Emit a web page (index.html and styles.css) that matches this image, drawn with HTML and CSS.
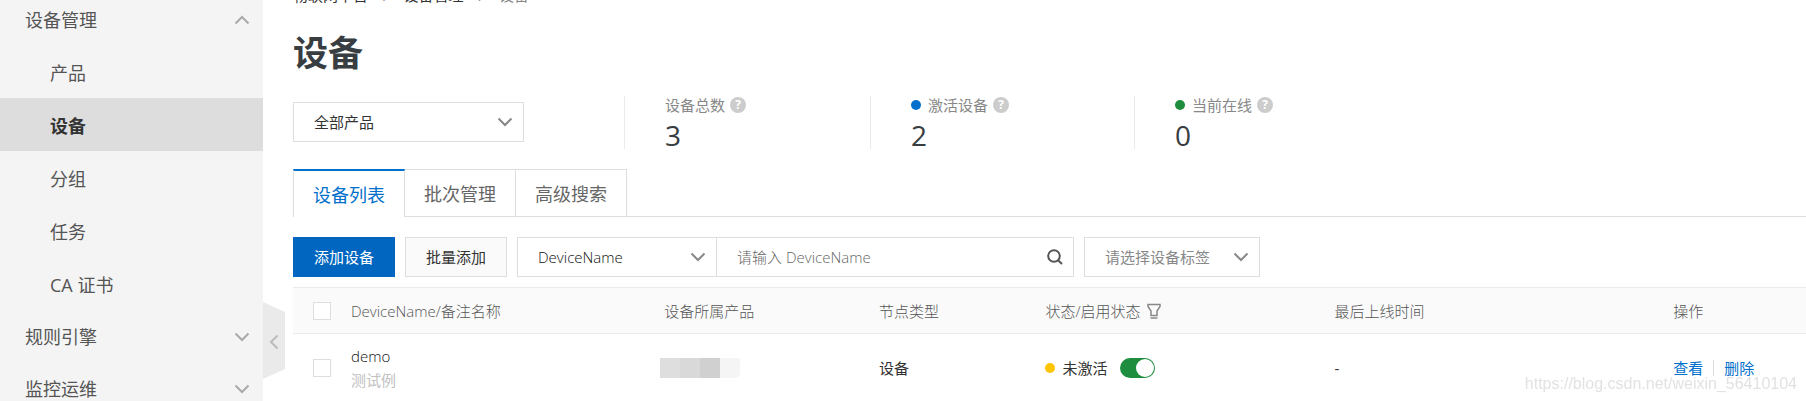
FILE: index.html
```html
<!DOCTYPE html>
<html lang="zh-CN">

<head>
    <meta charset="UTF-8">
    <meta name="viewport" content="width=device-width, initial-scale=1.0">
    <title>设备</title>
    <link rel="stylesheet" href="styles.css">
</head>

<body>
    <div class="layout">
        <nav class="sidebar">
            <a class="menu-item" href="#">设备管理
                <svg class="arrow" viewBox="0 0 16 10"><path d="M1.5 8.5L8 2l6.5 6.5" /></svg>
            </a>
            <a class="menu-item sub" href="#">产品</a>
            <a class="menu-item sub active" href="#">设备</a>
            <a class="menu-item sub" href="#">分组</a>
            <a class="menu-item sub" href="#">任务</a>
            <a class="menu-item sub" href="#">CA 证书</a>
            <a class="menu-item" href="#">规则引擎
                <svg class="arrow" viewBox="0 0 16 10"><path d="M1.5 1.5L8 8l6.5-6.5" /></svg>
            </a>
            <a class="menu-item" href="#">监控运维
                <svg class="arrow" viewBox="0 0 16 10"><path d="M1.5 1.5L8 8l6.5-6.5" /></svg>
            </a>
            <button class="collapse" type="button" aria-label="收起菜单">
                <svg viewBox="0 0 10 16"><path d="M8.5 1.5L2 8l6.5 6.5" /></svg>
            </button>
        </nav>

        <main class="main">
            <div class="breadcrumb">
                <a href="#">物联网平台</a>
                <span>/</span>
                <a href="#">设备管理</a>
                <span>/</span>
                <span>设备</span>
            </div>
            <h1 class="title">设备</h1>

            <div class="summary">
                <div class="select product-select">
                    <select aria-label="产品">
                        <option>全部产品</option>
                    </select>
                    <svg class="arrow" viewBox="0 0 16 10"><path d="M1.5 1.5L8 8l6.5-6.5" /></svg>
                </div>
                <div class="stat">
                    <div class="stat-label">设备总数<span class="help">?</span></div>
                    <div class="stat-value">3</div>
                </div>
                <div class="stat">
                    <div class="stat-label"><i class="dot blue"></i>激活设备<span class="help">?</span></div>
                    <div class="stat-value">2</div>
                </div>
                <div class="stat">
                    <div class="stat-label"><i class="dot green"></i>当前在线<span class="help">?</span></div>
                    <div class="stat-value">0</div>
                </div>
            </div>

            <div class="tabs">
                <button class="tab active" type="button">设备列表</button>
                <button class="tab" type="button">批次管理</button>
                <button class="tab" type="button">高级搜索</button>
            </div>

            <div class="toolbar">
                <button class="btn primary" type="button">添加设备</button>
                <button class="btn" type="button">批量添加</button>
                <div class="search-group">
                    <div class="select field-select">
                        <select aria-label="搜索字段">
                            <option>DeviceName</option>
                        </select>
                        <svg class="arrow" viewBox="0 0 16 10"><path d="M1.5 1.5L8 8l6.5-6.5" /></svg>
                    </div>
                    <div class="search">
                        <input type="text" placeholder="请输入 DeviceName" aria-label="DeviceName">
                        <button type="button" aria-label="搜索">
                            <svg viewBox="0 0 16 16"><circle cx="7" cy="7" r="5.8" /><path d="M11 11.2L15 15" /></svg>
                        </button>
                    </div>
                </div>
                <div class="select tag-select">
                    <select aria-label="设备标签">
                        <option>请选择设备标签</option>
                    </select>
                    <svg class="arrow" viewBox="0 0 16 10"><path d="M1.5 1.5L8 8l6.5-6.5" /></svg>
                </div>
            </div>

            <table class="table">
                <thead>
                    <tr>
                        <th class="col-check"><input type="checkbox" aria-label="全选"></th>
                        <th class="col-name">DeviceName/备注名称</th>
                        <th class="col-product">设备所属产品</th>
                        <th class="col-type">节点类型</th>
                        <th class="col-status">
                            <div class="cell">状态/启用状态
                                <svg class="filter" viewBox="0 0 14 16"><path d="M1 1.5h12v2L10 8v4.5H4V8L1 3.5z" /><path d="M3.500 15h7" /></svg>
                            </div>
                        </th>
                        <th class="col-time">最后上线时间</th>
                        <th>操作</th>
                    </tr>
                </thead>
                <tbody>
                    <tr>
                        <td class="col-check"><input type="checkbox" aria-label="demo"></td>
                        <td>
                            <div class="name">demo</div>
                            <div class="remark">测试例</div>
                        </td>
                        <td class="masked">
                            <div class="mosaic"><i></i><i></i><i></i><i></i></div>
                        </td>
                        <td>设备</td>
                        <td>
                            <div class="cell"><i class="dot yellow"></i>未激活
                                <input class="switch" type="checkbox" checked aria-label="启用状态">
                            </div>
                        </td>
                        <td>-</td>
                        <td>
                            <div class="cell actions"><a href="#">查看</a><a href="#">删除</a></div>
                        </td>
                    </tr>
                </tbody>
            </table>
        </main>
    </div>
    <div class="watermark">https://blog.csdn.net/weixin_56410104</div>
</body>

</html>
```
FILE: styles.css
```css
* {
    margin: 0;
    padding: 0;
    box-sizing: border-box;
}

body {
    height: 100vh;
    overflow: hidden;
    font-family: "Open Sans", "Noto Sans CJK SC", sans-serif;
    font-size: 15px;
    line-height: 24px;
    color: #333;
    background: #fff;
}

a {
    color: inherit;
    text-decoration: none;
}

button,
input,
select {
    font: inherit;
    color: inherit;
    background: none;
    border: none;
    border-radius: 0;
    outline: none;
}

svg {
    fill: none;
    stroke: currentColor;
    stroke-width: 2;
}

.layout {
    display: flex;
    min-height: 100vh;
}

/* 左侧菜单 */
.sidebar {
    position: relative;
    flex: none;
    width: 263px;
    margin-top: -7px;
    background: #f4f4f4;
}

.menu-item {
    display: flex;
    align-items: center;
    justify-content: space-between;
    height: 52px;
    padding: 2px 13px 0 25px;
    font-size: 18px;
    color: #555;
}

.menu-item.sub {
    height: 53px;
    padding-left: 50px;
}

.menu-item.active {
    font-weight: 700;
    color: #333;
    background: #ddd;
}

.arrow {
    width: 16px;
    height: 10px;
    color: #888;
    pointer-events: none;
}

.menu-item .arrow {
    color: #aaa;
}

.collapse {
    position: absolute;
    top: 309px;
    left: 100%;
    display: flex;
    align-items: center;
    justify-content: center;
    width: 22px;
    height: 77px;
    padding-top: 3px;
    color: #bbb;
    background: #eaeaea;
    clip-path: polygon(0 0, 100% 10px, 100% 67px, 0 100%);
}

.collapse svg {
    width: 10px;
    height: 16px;
}

/* 右侧内容 */
.main {
    flex: 1;
    min-width: 0;
    margin-top: -17px;
    padding-left: 30px;
}

.breadcrumb {
    display: flex;
    gap: 15px;
}

.breadcrumb span {
    color: #888;
}

.title {
    margin: 21px 0 18px;
    font-size: 35px;
    line-height: 50px;
    color: #373d41;
}

.summary {
    display: flex;
    align-items: flex-start;
}

.select {
    position: relative;
    height: 40px;
    border: 1px solid #dedede;
}

.select select {
    width: 100%;
    height: 100%;
    padding: 0 40px 0 20px;
    appearance: none;
}

.select .arrow {
    position: absolute;
    top: 14px;
    right: 10px;
}

.product-select {
    width: 231px;
    margin: 6px 100px 0 0;
}

.stat {
    height: 53px;
    margin-right: 124px;
    padding-left: 40px;
    border-left: 1px solid #ebebeb;
}

.stat + .stat {
    margin-right: 125px;
}

.stat-label {
    display: flex;
    align-items: center;
    height: 17px;
    color: #888;
}

.stat-value {
    font-size: 28px;
    line-height: 44px;
    color: #373d41;
}

.dot {
    width: 10px;
    height: 10px;
    margin-right: 7px;
    border-radius: 50%;
}

.dot.blue {
    background: #0070cc;
}

.dot.green {
    background: #1e8e3e;
}

.dot.yellow {
    background: #ffc400;
}

.help {
    width: 16px;
    height: 16px;
    margin-left: 5px;
    border-radius: 50%;
    font-size: 12px;
    font-weight: 700;
    line-height: 16px;
    text-align: center;
    color: #fff;
    background: #ccc;
}

.tabs {
    display: flex;
    height: 48px;
    margin-top: 20px;
    border-bottom: 1px solid #dedede;
}

.tab {
    height: 47px;
    padding: 2px 19px 0;
    border-top: 1px solid #dedede;
    border-right: 1px solid #dedede;
    font-size: 18px;
    color: #666;
}

.tab.active {
    height: 48px;
    border-top: 2px solid #0070cc;
    border-left: 1px solid #dedede;
    color: #0070cc;
    background: #fff;
}

.toolbar {
    display: flex;
    gap: 10px;
    margin: 20px 0 10px;
}

.btn {
    height: 40px;
    padding: 0 20px;
    border: 1px solid #dedede;
    background: #fafafa;
}

.btn.primary {
    border-color: #0066bf;
    color: #fff;
    background: #0066bf;
}

.search-group {
    display: flex;
}

.field-select {
    width: 200px;
}

.search {
    display: flex;
    align-items: center;
    width: 357px;
    padding: 0 10px 0 20px;
    border: 1px solid #dedede;
    border-left: none;
}

.search input {
    flex: 1;
    min-width: 0;
    height: 38px;
}

.search input,
.field-select,
.name,
.table th {
    font-weight: 300;
}

.field-select,
.name {
    color: #111;
}

.search input::placeholder {
    color: #666;
}

.search button {
    display: flex;
    color: #555;
}

.search svg {
    width: 16px;
    height: 16px;
}

.tag-select {
    width: 176px;
    color: #888;
}

/* 设备表格 */
.table {
    width: 100%;
    table-layout: fixed;
    border-collapse: collapse;
}

.table th,
.table td {
    padding: 0 0 0 20px;
    text-align: left;
    border-bottom: 1px solid #ebebeb;
}

.table th {
    height: 46px;
    color: #555;
    border-top: 1px solid #ebebeb;
    background: #fafafa;
}

.table td {
    height: 69px;
}

.col-check {
    width: 38px;
}

.col-name {
    width: 20.7%;
}

.col-product {
    width: 14.2%;
}

.col-type {
    width: 11%;
}

.col-status {
    width: 19.1%;
}

.col-time {
    width: 22.4%;
}

.col-check input {
    display: block;
    width: 18px;
    height: 18px;
    border: 1px solid #dedede;
    background: #fff;
    appearance: none;
}

.remark {
    color: #c1c1c1;
}

.table .masked {
    padding-left: 16px;
}

.mosaic {
    display: flex;
}

.mosaic i {
    width: 20px;
    height: 20px;
    background: #dedede;
}

.mosaic i:nth-child(2) {
    background: #d9d9d9;
}

.mosaic i:nth-child(3) {
    background: #d0d0d0;
}

.mosaic i:nth-child(4) {
    background: #f5f5f5;
    border-bottom-right-radius: 5px;
}

.cell {
    display: flex;
    align-items: center;
}

.filter {
    width: 14px;
    height: 16px;
    margin-left: 6px;
    color: #888;
    stroke-width: 1.5;
}

.switch {
    display: flex;
    justify-content: flex-end;
    width: 35px;
    height: 20px;
    margin-left: 13px;
    padding: 1px;
    border-radius: 10px;
    background: #1e8e3e;
    appearance: none;
}

.switch::before {
    content: "";
    width: 18px;
    height: 18px;
    border-radius: 50%;
    background: #fff;
}

.actions a {
    line-height: 16px;
    color: #0070cc;
}

.actions a + a {
    margin-left: 10px;
    padding-left: 10px;
    border-left: 1px solid #dedede;
}

.watermark {
    position: fixed;
    right: 9px;
    bottom: 8px;
    font-family: "Liberation Sans", sans-serif;
    font-size: 16px;
    line-height: 18px;
    color: #e2e2e2;
    pointer-events: none;
}
```
